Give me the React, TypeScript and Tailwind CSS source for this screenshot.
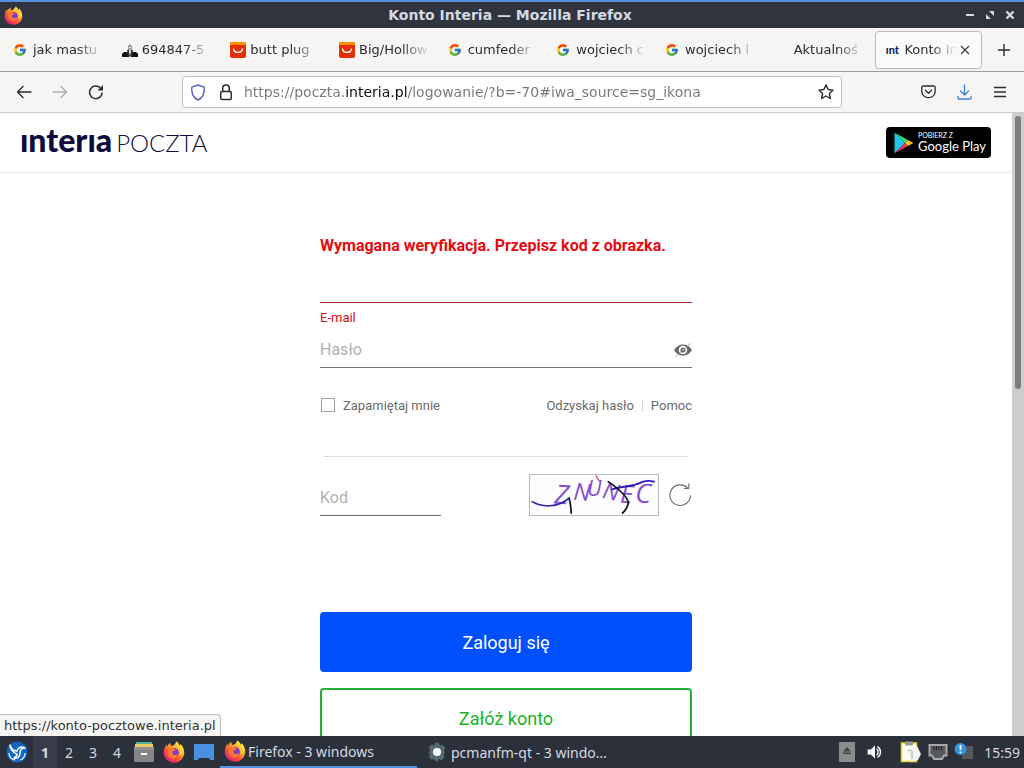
import { useState } from 'react'
import type { ReactNode } from 'react'
import { FcGoogle } from 'react-icons/fc'

type Tab = { title: string; icon: ReactNode; active?: boolean }

function FirefoxIcon({ id, size }: { id: string; size: number }) {
  return (
    <svg width={size} height={size} viewBox="0 0 24 24" aria-hidden="true" className="shrink-0">
      <defs>
        <linearGradient id={id} x1="0.85" y1="0.1" x2="0.2" y2="0.95">
          <stop offset="0" stopColor="#fff04a" />
          <stop offset="0.35" stopColor="#ffa62b" />
          <stop offset="0.65" stopColor="#ff5236" />
          <stop offset="1" stopColor="#e3157f" />
        </linearGradient>
      </defs>
      <path
        d="M14.6.6c2 1.4 3 3.2 3.3 4.7 1-.3 1.1-1.3 1-2 2.6 2.2 4.3 5.6 4.3 9.2C23.2 19 18.2 23.6 12 23.6S.8 19 .8 12.6c0-3.200 1.200-6.400 3.100-8.800 0 1 .2 1.800.6 2.400C5.200 4.500 6.500 2.900 8 2c-.1 1.300.4 2.600 1.300 3.400 2.400-.2 4-1.900 5.300-4.800z"
        fill={`url(#${id})`}
      />
      <circle cx="12" cy="13" r="5.3" fill="#8239c9" />
      <path d="M5.500 8.600c2-1.600 4.300-1.400 6-.2 1.200.1 2 .5 2.300 1.100-.5 1-1.700 1.300-2.900 1.500-.8 1.100-.9 2.400 0 3.500 1.500 1.500 4 1 5.400-.6-.2 3.600-3 5.600-6 5.300-4.500-.5-6.900-5.600-4.800-10.600z" fill="#ff7a30" />
      <path d="M14.600.6c.1 4.200 3.700 5.600 4.100 10.200.2 2.700-.9 4.400-1.700 5.200 3.800-1 5.200-4.300 4.600-7.600-.5-2.300-1.500-3.800-2.700-5.100.1.700 0 1.700-1 2-.3-1.500-1.300-3.300-3.300-4.700z" fill="#ffd738" />
    </svg>
  )
}

function AliIcon() {
  return (
    <svg width="16" height="16" viewBox="0 0 16 16" aria-hidden="true">
      <rect width="16" height="16" rx="2" fill="#e62e04" />
      <path d="M0 3V2a2 2 0 0 1 2-2h12a2 2 0 0 1 2 2v1z" fill="#ff9000" />
      <path d="M3.5 7c1 4.500 8 4.500 9 0" fill="none" stroke="#fff" strokeWidth="1.3" strokeLinecap="round" />
    </svg>
  )
}

function CrewIcon() {
  return (
    <svg width="16" height="16" viewBox="0 0 16 16" aria-hidden="true">
      <path d="M0 15v-3l2-2h3.500l2 5zM16 15v-3l-2-2h-3.500l-2 5z" fill="#111" />
      <path d="M5 8.500 6.500 7l1.500 3 1.500-3L11 8.500 9.500 14h-3z" fill="#333" />
      <path d="m7 9 1 5 1-5z" fill="#fff" />
      <circle cx="8" cy="5.5" r="1.6" fill="none" stroke="#777" />
      <path d="M5.500 4.300 8 2.500l2.500 1.800z" fill="#888" />
    </svg>
  )
}

function IntIcon() {
  return <span className="w-4 text-center font-[Lato] text-[11px] leading-4 font-black text-[#14285a]">ınt</span>
}

const TABS: Tab[] = [
  { title: 'jak mastu', icon: <FcGoogle size={14} /> },
  { title: '694847-5', icon: <CrewIcon /> },
  { title: 'butt plug', icon: <AliIcon /> },
  { title: 'Big/Hollow', icon: <AliIcon /> },
  { title: 'cumfeder', icon: <FcGoogle size={14} /> },
  { title: 'wojciech c', icon: <FcGoogle size={14} /> },
  { title: 'wojciech l', icon: <FcGoogle size={14} /> },
  { title: 'Aktualnoś', icon: null },
  { title: 'Konto In', icon: <IntIcon />, active: true },
]

const iconBtn = 'flex items-center justify-center text-[#2b2a33]'

function TitleBar() {
  return (
    <header className="flex h-7 shrink-0 items-center border-t-2 border-[#5590dc] bg-[#2f343f] px-1">
      <div className="flex flex-1 items-center"><FirefoxIcon id="fx-title" size={19} /></div>
      <h1 className="text-[14px] font-bold text-[#d3dae3]">Konto Interia — Mozilla Firefox</h1>
      <div className="flex flex-1 items-center justify-end gap-2 pr-1">
        <button type="button" aria-label="Minimalizuj">
          <svg width="12" height="12" viewBox="0 0 12 12"><path d="M2 6h8" stroke="#d3dae3" strokeWidth="2" /></svg>
        </button>
        <button type="button" aria-label="Przywróć">
          <svg width="12" height="12" viewBox="0 0 12 12"><path d="M5 2h5v5zM2 5v5h5z" fill="#d3dae3" /></svg>
        </button>
        <button type="button" aria-label="Zamknij">
          <svg width="12" height="12" viewBox="0 0 12 12"><path d="m2.500 2.500 7 7m0-7-7 7" stroke="#d3dae3" strokeWidth="2.4" /></svg>
        </button>
      </div>
    </header>
  )
}

function TabStrip() {
  return (
    <nav className="flex h-11 shrink-0 items-stretch border-b border-[#9c9d98] bg-[#f6f5f4] pl-1.5">
      {TABS.map((t) => (
        <div key={t.title} className="flex min-w-0 flex-1 pt-[3px] pr-0.5 pb-0.5">
          <div className={`flex min-w-0 flex-1 items-center rounded border ${t.active ? 'border-[#bdbcc0] bg-[#fbfafa] shadow-xs' : 'border-transparent'}`}>
            <button type="button" className={`flex min-w-0 flex-1 items-center gap-1 text-left ${t.active ? 'pl-2' : 'pl-1.5'}`}>
              <span className="flex w-4 shrink-0">{t.icon}</span>
              <span className={`flex-1 overflow-hidden text-[13px] whitespace-nowrap text-[#2b2a33] mask-r-to-100% ${t.active ? 'mask-r-from-50%' : 'mr-2 mask-r-from-60%'}`}>{t.title}</span>
            </button>
            {t.active && (
              <button type="button" aria-label="Zamknij kartę" className="flex w-6 shrink-0 justify-center pr-2">
                <svg width="10" height="10" viewBox="0 0 10 10"><path d="m1 1 8 8m0-8-8 8" stroke="#3a3944" strokeWidth="1.2" /></svg>
              </button>
            )}
          </div>
        </div>
      ))}
      <button type="button" aria-label="Nowa karta" className={`w-10 ${iconBtn}`}>
        <svg width="12" height="12" viewBox="0 0 12 12"><path d="M6 0v12M0 6h12" stroke="currentColor" strokeWidth="1.4" /></svg>
      </button>
    </nav>
  )
}

function NavBar() {
  const [url, setUrl] = useState('https://poczta.interia.pl/logowanie/?b=-70#iwa_source=sg_ikona')
  return (
    <div className="flex h-[41px] shrink-0 items-center border-b border-[#cccccc] bg-[#f6f5f4] px-2">
      <div className="flex w-[174px] gap-1">
        <button type="button" aria-label="Wstecz" className={`size-8 ${iconBtn}`}>
          <svg width="16" height="16" viewBox="0 0 16 16" fill="none" stroke="currentColor" strokeWidth="1.4" strokeLinecap="round" strokeLinejoin="round"><path d="M15 8H1.500M7 2.500 1.500 8 7 13.500" /></svg>
        </button>
        <button type="button" aria-label="Dalej" className={`size-8 opacity-35 ${iconBtn}`}>
          <svg width="16" height="16" viewBox="0 0 16 16" fill="none" stroke="currentColor" strokeWidth="1.4" strokeLinecap="round" strokeLinejoin="round"><path d="M1 8h13.500M9 2.500 14.500 8 9 13.500" /></svg>
        </button>
        <button type="button" aria-label="Odśwież" className={`size-8 ${iconBtn}`}>
          <svg width="16" height="16" viewBox="0 0 16 16" fill="none" stroke="currentColor" strokeWidth="1.5"><path d="M14.200 8.500A6.300 6.300 0 1 1 12.300 3.800" /><path d="M15 1v5.500H9.500z" fill="currentColor" stroke="none" /></svg>
        </button>
      </div>
      <div className="flex h-8 w-[660px] min-w-0 items-center gap-2.5 rounded border border-[#bfbeba] bg-white px-[7px]">
        <div className="flex shrink-0 gap-3">
          <svg width="16" height="17" viewBox="0 0 16 17" aria-hidden="true" fill="none" stroke="#5d5fc4" strokeWidth="1.4" strokeLinejoin="round"><path d="M8 1 14.200 3.200c.5 6-1.600 10.600-6.200 12.800C3.400 13.800 1.300 9.200 1.800 3.200z" /></svg>
          <svg width="16" height="17" viewBox="0 0 16 17" aria-hidden="true" fill="none" stroke="#2b2a33" strokeWidth="1.5"><rect x="2.7" y="7.5" width="10.6" height="8" rx="1.5" /><path d="M4.700 7.500V4.300a3.300 3.300 0 0 1 6.600 0v3.200" /></svg>
        </div>
        <input aria-label="Adres" value={url} onChange={(e) => setUrl(e.target.value)}
          className="min-w-0 flex-1 bg-[linear-gradient(to_right,#76767c_101px,#0c0c0d_101px,#0c0c0d_163px,#76767c_163px)] bg-clip-text text-[14px] text-transparent outline-none" />
        <button type="button" aria-label="Dodaj zakładkę" className={iconBtn}>
          <svg width="16" height="16" viewBox="0 0 16 16" fill="none" stroke="currentColor" strokeWidth="1.4" strokeLinejoin="round"><path d="m8 .9 2.100 4.600 5 .6-3.700 3.400 1 5L8 12l-4.400 2.500 1-5L.9 6.100l5-.6z" /></svg>
        </button>
      </div>
      <div className="flex flex-1 justify-end gap-1">
        <button type="button" aria-label="Zapisz w Pocket" className={`size-8 ${iconBtn}`}>
          <svg width="15" height="14" viewBox="0 0 15 14" fill="none" stroke="currentColor" strokeWidth="1.3" strokeLinecap="round" strokeLinejoin="round"><path d="M2.200 1h10.600A1.400 1.400 0 0 1 14.200 2.400v4a6.700 6.300 0 0 1-13.400 0v-4A1.400 1.400 0 0 1 2.200 1z" /><path d="m4.400 5.300 3.100 3 3.100-3" /></svg>
        </button>
        <button type="button" aria-label="Pobrane" className="flex size-8 items-center justify-center text-[#3d82cf]">
          <svg width="15" height="16" viewBox="0 0 15 16" fill="none" stroke="currentColor" strokeWidth="1.3" strokeLinecap="round" strokeLinejoin="round"><path d="M7.500 1v10M3.500 7l4 4 4-4M1 12.500V14a1 1 0 0 0 1 1h11a1 1 0 0 0 1-1v-1.500" /></svg>
        </button>
        <button type="button" aria-label="Menu" className={`size-8 ${iconBtn}`}>
          <svg width="12" height="12" viewBox="0 0 12 12"><path d="M0 1.500h12M0 6h12M0 10.500h12" stroke="currentColor" strokeWidth="1.3" /></svg>
        </button>
      </div>
    </div>
  )
}

function SiteHeader() {
  return (
    <div className="flex h-[60px] items-center justify-between border-b border-[#e9eaec] pr-[21px] pl-5">
      <a href="#poczta" className="flex items-baseline gap-1 pb-0.5 font-[Lato] text-[#0e0a3c]">
        <span className="text-[32px] leading-8 font-black">ınterıa</span>
        <span className="text-[24px] leading-8 font-light">POCZTA</span>
      </a>
      <a href="#google-play" className="flex h-[31px] w-[105px] items-center gap-1 rounded bg-black pl-2 text-white">
        <svg width="20" height="22" viewBox="0 0 20 22" aria-hidden="true" className="shrink-0">
          <path d="M.5.8v20.400L11 11z" fill="#20c4e8" />
          <path d="M.5.800 14 8 11 11z" fill="#2fdc84" />
          <path d="M.5 21.200 14 14l-3-3z" fill="#e8384f" />
          <path d="m14 8 5.500 3L14 14l-3-3z" fill="#fbbd2c" />
        </svg>
        <span className="flex flex-col font-[Lato]">
          <span className="text-[7px] leading-[7px]">POBIERZ Z</span>
          <span className="text-[13px] leading-[14px] whitespace-nowrap">Google Play</span>
        </span>
      </a>
    </div>
  )
}

function Captcha() {
  return (
    <svg width="130" height="42" viewBox="0 0 130 42" role="img" aria-label="Kod z obrazka" className="overflow-visible border border-[#b9b9bd] bg-[#fdfcff]">
      <g fontFamily="'Open Sans', sans-serif" fontStyle="italic" fontSize="28" fill="#8450d0">
        <text transform="translate(23 30) rotate(4)">Z</text>
        <text transform="translate(43 26) rotate(4)" fontSize="25">N</text>
        <text transform="translate(58 22)" fontSize="22">U</text>
        <text transform="translate(73 24) rotate(12)" fontSize="24">N</text>
        <text transform="translate(92 29) rotate(4)" fontSize="26">E</text>
        <text transform="translate(108 29) rotate(2)">C</text>
      </g>
      <g fill="none" strokeLinecap="round">
        <path d="M0 28c10 6 27 7 39-4" stroke="#2a1fa8" strokeWidth="1.6" />
        <path d="M84 15c12-4 20-2 30-7 6-3 10-2 14-1" stroke="#2a1fb4" strokeWidth="2" />
        <path d="M39 25c1 4 2 9 2 15" stroke="#111" strokeWidth="1.8" />
        <path d="M80 7c10 7 20 15 21 22 0 4-3 8-6 11" stroke="#111" strokeWidth="1.8" />
        <path d="m67 1 4 6" stroke="#c9566e" strokeWidth="1.4" />
      </g>
    </svg>
  )
}

function LoginForm() {
  const [remember, setRemember] = useState(false)
  const [visible, setVisible] = useState(false)
  return (
    <form className="mx-auto flex w-[372px] flex-col pt-[61px] font-[Roboto] text-[#6b6b6b]" onSubmit={(e) => e.preventDefault()}>
      <p className="text-[16px] leading-6 font-bold text-[#e60a0f]">Wymagana weryfikacja. Przepisz kod z obrazka.</p>

      {/* email i hasło */}
      <div className="mt-[15px] flex flex-col">
        <input id="email" type="email" className="h-[30px] border-b border-[#b02a3c] outline-none" />
        <label htmlFor="email" className="mt-[5px] text-[13px] leading-5 text-[#cf0e1a]">E-mail</label>
      </div>
      <div className="mt-1 flex h-9 items-center border-b border-[#747474]">
        <input aria-label="Hasło" type={visible ? 'text' : 'password'} placeholder="Hasło" className="min-w-0 flex-1 text-[16px] outline-none placeholder:text-[#b0b0b0]" />
        <button type="button" aria-label="Pokaż hasło" onClick={() => setVisible(!visible)}>
          <svg width="18" height="14" viewBox="0 0 18 14">
            <path d="M0 7c4-7.500 14-7.500 18 0-4 7.500-14 7.500-18 0z" fill="#6a6a6a" />
            <circle cx="9" cy="7" r="4.2" fill="#fff" />
            <circle cx="9" cy="7" r="2.6" fill="#6a6a6a" />
            <circle cx="9.5" cy="6.6" r="0.9" fill="#fff" />
            <path d="M1.500 13.500 16.500.5" stroke="#8a8a8a" strokeWidth="0.8" />
          </svg>
        </button>
      </div>

      <div className="mt-7 flex items-center justify-between text-[13px] leading-5">
        <label className="flex items-center gap-2">
          <input type="checkbox" checked={remember} onChange={(e) => setRemember(e.target.checked)} className="mb-0.5 ml-px size-3.5 appearance-none border border-[#a2a2a2] checked:bg-[#0050ff]" />
          Zapamiętaj mnie
        </label>
        <div className="flex items-center gap-2">
          <a href="#odzyskaj">Odzyskaj hasło</a>
          <span className="h-3 w-px bg-[#d8d8d8]" />
          <a href="#pomoc">Pomoc</a>
        </div>
      </div>

      {/* kod z obrazka */}
      <div className="mx-1 mt-10 border-t border-dotted border-[#c8c8c8]" />
      <div className="mt-[17px] flex items-end">
        <input aria-label="Kod" placeholder="Kod" className="h-[37px] w-[121px] border-b border-[#6a6a6a] text-[16px] outline-none placeholder:text-[#b0b0b0]" />
        <div className="flex flex-1 items-center justify-end gap-2.5">
          <Captcha />
          <button type="button" aria-label="Nowy obrazek">
            <svg width="23" height="24" viewBox="0 0 23 24" fill="none" stroke="#6f6f6f" strokeWidth="1.2"><path d="M21.500 12.500A10.300 10.300 0 1 1 18.600 5M19.800.5v5h-5" /></svg>
          </button>
        </div>
      </div>

      <div className="mt-24 flex flex-col gap-4 text-[18px]">
        <button type="submit" className="h-[60px] rounded bg-[#0050ff] text-white">Zaloguj się</button>
        <button type="button" className="h-[60px] rounded border-2 border-[#22b030] text-[#17b428]">Załóż konto</button>
      </div>
    </form>
  )
}

function Taskbar() {
  return (
    <footer className="flex h-8 shrink-0 items-center bg-[#2b303b] font-['Noto_Sans'] text-[14px] text-[#d3dae3]">
      <button type="button" aria-label="Menu główne" className="flex w-[33px] justify-center">
        <svg width="22" height="22" viewBox="0 0 22 22">
          <circle cx="11" cy="11" r="10.5" fill="#0e68c4" />
          <path d="M4 4c1 4 4 6 7 6 1-4 5-5 8-3-3 0-5 2-5 5 0 4-3 6-6 5 2-1 3-2 3-4-4-1-7-5-7-9z" fill="none" stroke="#fff" strokeWidth="1.5" strokeLinejoin="round" />
          <path d="M3 12c0 3 2 6 6 7m5 0c3-1 5-4 5-7" fill="none" stroke="#dbeaff" strokeWidth="1.3" />
        </svg>
      </button>
      <div className="flex">
        <button type="button" className="h-8 w-6 bg-[#383c4a] font-bold">1</button>
        <button type="button" className="h-8 w-6">2</button>
        <button type="button" className="h-8 w-6">3</button>
        <button type="button" className="h-8 w-6">4</button>
      </div>
      <div className="flex items-center gap-2 px-1">
        <button type="button" aria-label="Pliki">
          <svg width="22" height="22" viewBox="0 0 22 22">
            <path d="M3 1h16v3H3z" fill="#4fb3a0" /><path d="M2 3h18v4H2z" fill="#e9cd5e" />
            <rect x="1" y="6" width="20" height="15" rx="1" fill="#858585" /><path d="M1 6h20v3H1z" fill="#929292" />
            <rect x="8" y="12" width="6" height="2" fill="#fff" />
          </svg>
        </button>
        <button type="button" aria-label="Firefox"><FirefoxIcon id="fx-launch" size={22} /></button>
        <button type="button" aria-label="Pulpit">
          <svg width="22" height="22" viewBox="0 0 22 22"><path d="M1 3h20v16h-4l-1-2H6l-1 2H1z" fill="#4a90e2" /></svg>
        </button>
      </div>
      <button type="button" className="ml-px flex h-8 w-[197px] items-center gap-0.5 border-b-2 border-[#5294e2] pl-1">
        <FirefoxIcon id="fx-task" size={22} />
        Firefox - 3 windows
      </button>
      <button type="button" className="flex h-8 items-center gap-1 pl-2.5">
        <svg width="20" height="22" viewBox="0 0 24 24" aria-hidden="true">
          <path d="M9.500 1h5l.8 3.200 3.300-1 3.400 4-2 2.800 2 2-2 2.800 1.200 3.700-4.200 3.300-2.400-1.600L13 23h-3l-1.400-3-3 1.300L2 17.500 4 14.500l-2.500-2L4 10 2 7l3.500-4 3.300 1.200z" fill="#566c73" />
          <circle cx="12" cy="12" r="4.8" fill="#fff" />
        </svg>
        pcmanfm-qt - 3 windo…
      </button>
      <div className="flex flex-1 items-center justify-end pr-1">
        <div className="mr-4 flex items-center gap-2.5">
          <svg width="18" height="22" viewBox="0 0 18 22" aria-hidden="true"><rect x="1" y="1" width="16" height="20" fill="#8c8c8e" /><path d="m9 6 4 4.500H5zM5 11.500h8V13H5z" fill="#444" /></svg>
          <svg width="18" height="18" viewBox="0 0 22 20" aria-hidden="true"><path d="M2 7h4l5-5v16l-5-5H2z" fill="#fff" /><path d="M13 6c2.500 2 2.500 6 0 8M14 3.500c5 3 5 10 0 13" fill="none" stroke="#fff" strokeWidth="1.6" /></svg>
        </div>
        <div className="mr-2.5 flex items-center gap-1.5">
          <svg width="22" height="22" viewBox="0 0 22 22" aria-hidden="true"><rect x="1.5" y="2" width="15" height="18.5" fill="#fffef0" stroke="#e2d53a" strokeWidth="1.6" /><rect x="5" y="0.5" width="8" height="4" rx="1" fill="#999" /><path d="M8 7 17 5l4 8-3 6-7 2z" fill="#f4f4f4" /><path d="m8 9 4 1 0 8" fill="none" stroke="#aaa" /></svg>
          <svg width="20" height="20" viewBox="0 0 20 20" aria-hidden="true"><path d="M1.500 3h17v10.500H16L14 17H6l-2-3.500H1.500z" fill="#55585c" stroke="#a9a9ab" strokeWidth="2" /><path d="M6 4v4m2.500-4v4M11 4v4m2.500-4v4" stroke="#222" /></svg>
          <svg width="20" height="20" viewBox="0 0 20 20" aria-hidden="true"><rect x="8" y="4" width="11" height="13" fill="#54585f" /><circle cx="6.5" cy="7" r="6" fill="#3a93dc" /><path d="M6.500 3v5M6.500 9.500v1.800" stroke="#fff" strokeWidth="1.8" /></svg>
        </div>
        <time>15:59</time>
      </div>
    </footer>
  )
}

export default function App() {
  return (
    <div className="flex h-screen flex-col overflow-hidden bg-white font-['DejaVu_Sans',sans-serif]">
      <TitleBar />
      <TabStrip />
      <NavBar />
      <div className="relative flex min-h-0 flex-1">
        <main className="min-w-0 flex-1 overflow-hidden">
          <SiteHeader />
          <LoginForm />
        </main>
        <div className="flex w-3 shrink-0 justify-center bg-[#cdcdcd] pt-[3px]">
          <div className="h-[44%] w-1.5 rounded-full bg-[#7c7d7e]" />
        </div>
        <div className="absolute bottom-0 left-0 rounded-tr border-t border-r border-[#bdbdbd] bg-[#f6f5f4] px-1 text-[13px] leading-[21px] text-[#333]">https://konto-pocztowe.interia.pl</div>
      </div>
      <Taskbar />
    </div>
  )
}
